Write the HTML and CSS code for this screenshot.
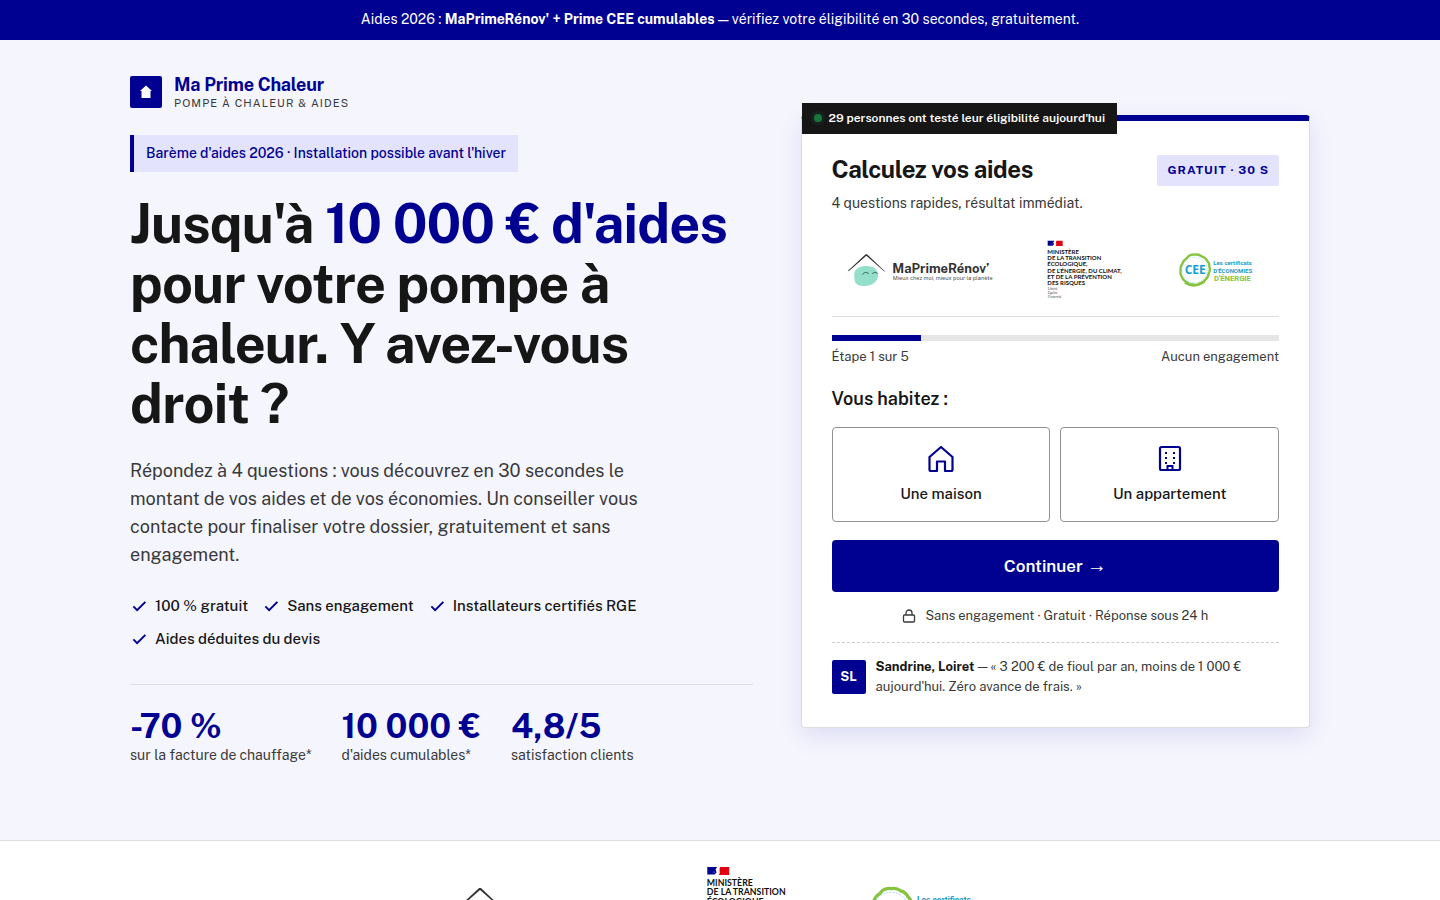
FILE: index.html
```html
<!DOCTYPE html>
<html lang="fr">
<head>
    <meta charset="UTF-8">
    <meta name="viewport" content="width=device-width, initial-scale=1.0">
    <title>Ma Prime Chaleur - Pompe à chaleur &amp; aides</title>
    <link rel="stylesheet" href="styles.css">
</head>
<body>
    <svg class="sprite" aria-hidden="true">
        <symbol id="check" viewBox="0 0 24 24">
            <path d="M4.5 12.5l5 5L20.500 6.500" fill="none" stroke="currentColor" stroke-width="2.600"/>
        </symbol>
    </svg>

    <div class="topbar">Aides 2026 : <strong>MaPrimeRénov' + Prime CEE cumulables</strong> — vérifiez votre éligibilité en 30 secondes, gratuitement.</div>

    <main class="hero">
        <div class="container hero-grid">
            <section class="intro">
                <a class="brand" href="#">
                    <span class="brand-icon">
                        <svg viewBox="0 0 32 32" width="32" height="32" aria-hidden="true">
                            <path d="M16 9.5l6 5.500h-1.500v7h-9v-7H10z" fill="#fff"/>
                        </svg>
                    </span>
                    <span>
                        <span class="brand-name">Ma Prime Chaleur</span>
                        <span class="brand-sub">Pompe à chaleur &amp; aides</span>
                    </span>
                </a>

                <p class="tag">Barème d'aides 2026 · Installation possible avant l'hiver</p>
                <h1>Jusqu'à <span class="accent">10 000 € d'aides</span> pour votre pompe à chaleur. Y avez-vous droit ?</h1>
                <p class="lead">Répondez à 4 questions : vous découvrez en 30 secondes le montant de vos aides et de vos économies. Un conseiller vous contacte pour finaliser votre dossier, gratuitement et sans engagement.</p>

                <ul class="checks">
                    <li><svg width="18" height="18" aria-hidden="true"><use href="#check"/></svg>100 % gratuit</li>
                    <li><svg width="18" height="18" aria-hidden="true"><use href="#check"/></svg>Sans engagement</li>
                    <li><svg width="18" height="18" aria-hidden="true"><use href="#check"/></svg>Installateurs certifiés RGE</li>
                    <li><svg width="18" height="18" aria-hidden="true"><use href="#check"/></svg>Aides déduites du devis</li>
                </ul>

                <div class="stats">
                    <div class="stat"><strong>-70 %</strong><span>sur la facture de chauffage*</span></div>
                    <div class="stat"><strong>10 000 €</strong><span>d'aides cumulables*</span></div>
                    <div class="stat"><strong>4,8/5</strong><span>satisfaction clients</span></div>
                </div>
            </section>

            <section class="card">
                <div class="live"><span class="dot"></span>29 personnes ont testé leur éligibilité aujourd'hui</div>
                <div class="card-head">
                    <h2>Calculez vos aides</h2>
                    <span class="pill">Gratuit · 30 s</span>
                </div>
                <p class="card-sub">4 questions rapides, résultat immédiat.</p>

                <div class="card-logos">
                    <svg class="logo-mpr" viewBox="0 0 534 180">
                        <path d="M67 102C68 84 88 77 104 78C126 78 138 90 138 106C138 126 120 138 98 138C80 139 68 132 68 120C68 114 66 110 67 102z" fill="#93dfca"/>
                        <path d="M50 94l-2-2 53-49h4l55 52-4-1-53-47z" fill="#333"/>
                        <path d="M92 104c3-8 14-9 18-2M121 102c4-7 13-6 16 0" fill="none" stroke="#2f5f54" stroke-width="3"/>
                        <text class="mpr-name" x="181" y="98">MaPrimeRénov’</text>
                        <text class="mpr-line" x="182" y="121">Mieux chez moi, mieux pour la planète</text>
                    </svg>
                    <svg class="logo-ministry" viewBox="0 0 240 180">
                        <path d="M17 2h20l-3 5 2 6-4 4H17z" fill="#000091"/>
                        <path d="M43 2h19v16H41l2-5-1-5z" fill="#e1000f"/>
                        <path d="M28 14l3-3 1 3M40 9l2 2-1 3" fill="none" stroke="#9090c8"/>
                        <g class="ministry-name">
                            <text x="16" y="41">MINISTÈRE</text>
                            <text x="16" y="60">DE LA TRANSITION</text>
                            <text x="16" y="79">ÉCOLOGIQUE,</text>
                            <text x="16" y="98">DE L'ÉNERGIE, DU CLIMAT,</text>
                            <text x="16" y="117">ET DE LA PRÉVENTION</text>
                            <text x="16" y="136">DES RISQUES</text>
                        </g>
                        <g class="ministry-motto">
                            <text x="17" y="151">Liberté</text>
                            <text x="17" y="163">Égalité</text>
                            <text x="17" y="175">Fraternité</text>
                        </g>
                    </svg>
                    <svg class="logo-cee" viewBox="0 0 375 180">
                        <path d="M104 48q10-6 19-4 12-2 20 5 11 3 16 13 8 8 7 18 4 11-2 20-1 12-10 19-6 10-17 11-10 7-20 3-12 1-19-7-11-4-14-15-7-9-4-20-2-11 5-20 4-11 13-16z" fill="none" stroke="#86c440" stroke-width="7"/>
                        <circle cx="122" cy="90" r="38" fill="none" stroke="#9ed5e6" stroke-width="2" stroke-dasharray="4 3"/>
                        <path d="M92 128q30 20 61-4" fill="none" stroke="#86c440" stroke-width="6"/>
                        <text class="cee-mark" x="92" y="103">CEE</text>
                        <text class="cee-line" x="178" y="74">Les certificats</text>
                        <text class="cee-line" x="178" y="99">D'ÉCONOMIES</text>
                        <text class="cee-line cee-green" x="180" y="124">D'ÉNERGIE</text>
                    </svg>
                </div>

                <div class="progress"><div class="progress-fill" style="width: 20%"></div></div>
                <div class="progress-meta"><span>Étape 1 sur 5</span><span>Aucun engagement</span></div>

                <h3>Vous habitez :</h3>
                <div class="options">
                    <button type="button" class="option">
                        <svg viewBox="0 0 28 28" width="28" height="28" aria-hidden="true">
                            <path d="M14 2L2.500 12v12.500q0 1.500 1.500 1.500h6V16.500h8V26h6q1.500 0 1.500-1.500V12z" fill="none" stroke="currentColor" stroke-width="2.200" stroke-linejoin="round"/>
                        </svg>
                        Une maison
                    </button>
                    <button type="button" class="option">
                        <svg viewBox="0 0 28 28" width="28" height="28" aria-hidden="true">
                            <rect x="4" y="2" width="20" height="23" rx="1.500" fill="none" stroke="currentColor" stroke-width="2.200"/>
                            <path d="M9 7h2v2H9zM17 7h2v2h-2zM9 12h2v2H9zM17 12h2v2h-2zM9 17h2v2H9zM17 17h2v2h-2z" fill="currentColor"/>
                            <path d="M11.500 25v-4h5v4" fill="none" stroke="currentColor" stroke-width="2"/>
                        </svg>
                        Un appartement
                    </button>
                </div>

                <button type="button" class="cta">Continuer <span class="arrow">→</span></button>

                <p class="reassure">
                    <svg viewBox="0 0 14 14" width="14" height="14" aria-hidden="true">
                        <path d="M2.500 6h9q1 0 1 1v5q0 1-1 1h-9q-1 0-1-1V7q0-1 1-1zM4 6V4a3 3 0 0 1 6 0v2" fill="none" stroke="currentColor" stroke-width="1.300"/>
                    </svg>
                    Sans engagement · Gratuit · Réponse sous 24 h
                </p>

                <div class="review">
                    <span class="avatar">SL</span>
                    <p><strong>Sandrine, Loiret</strong> — « 3 200 € de fioul par an, moins de 1 000 € aujourd'hui. Zéro avance de frais. »</p>
                </div>
            </section>
        </div>
    </main>

    <section class="partners">
        <svg class="logo-mpr" viewBox="0 0 534 180">
            <path d="M67 102C68 84 88 77 104 78C126 78 138 90 138 106C138 126 120 138 98 138C80 139 68 132 68 120C68 114 66 110 67 102z" fill="#93dfca"/>
            <path d="M50 94l-2-2 53-49h4l55 52-4-1-53-47z" fill="#333"/>
            <path d="M92 104c3-8 14-9 18-2M121 102c4-7 13-6 16 0" fill="none" stroke="#2f5f54" stroke-width="3"/>
            <text class="mpr-name" x="181" y="98">MaPrimeRénov’</text>
            <text class="mpr-line" x="182" y="121">Mieux chez moi, mieux pour la planète</text>
        </svg>
        <svg class="logo-ministry" viewBox="0 0 240 180">
            <path d="M17 2h20l-3 5 2 6-4 4H17z" fill="#000091"/>
            <path d="M43 2h19v16H41l2-5-1-5z" fill="#e1000f"/>
            <path d="M28 14l3-3 1 3M40 9l2 2-1 3" fill="none" stroke="#9090c8"/>
            <g class="ministry-name">
                <text x="16" y="41">MINISTÈRE</text>
                <text x="16" y="60">DE LA TRANSITION</text>
                <text x="16" y="79">ÉCOLOGIQUE,</text>
                <text x="16" y="98">DE L'ÉNERGIE, DU CLIMAT,</text>
                <text x="16" y="117">ET DE LA PRÉVENTION</text>
                <text x="16" y="136">DES RISQUES</text>
            </g>
            <g class="ministry-motto">
                <text x="17" y="151">Liberté</text>
                <text x="17" y="163">Égalité</text>
                <text x="17" y="175">Fraternité</text>
            </g>
        </svg>
        <svg class="logo-cee" viewBox="0 0 375 180">
            <path d="M104 48q10-6 19-4 12-2 20 5 11 3 16 13 8 8 7 18 4 11-2 20-1 12-10 19-6 10-17 11-10 7-20 3-12 1-19-7-11-4-14-15-7-9-4-20-2-11 5-20 4-11 13-16z" fill="none" stroke="#86c440" stroke-width="7"/>
            <circle cx="122" cy="90" r="38" fill="none" stroke="#9ed5e6" stroke-width="2" stroke-dasharray="4 3"/>
            <path d="M92 128q30 20 61-4" fill="none" stroke="#86c440" stroke-width="6"/>
            <text class="cee-mark" x="92" y="103">CEE</text>
            <text class="cee-line" x="178" y="74">Les certificats</text>
            <text class="cee-line" x="178" y="99">D'ÉCONOMIES</text>
            <text class="cee-line cee-green" x="180" y="124">D'ÉNERGIE</text>
        </svg>
    </section>
</body>
</html>
```
FILE: styles.css
```css
* {
    box-sizing: border-box;
}
html {
    overflow-x: hidden;
    scrollbar-width: none;
}
body {
    margin: 0;
    background: #fff;
    color: #161616;
    font-family: 'Public Sans', Inter, sans-serif;
    font-size: 16px;
}
h1, h2, h3, p, ul {
    margin: 0;
    padding: 0;
}
button {
    font-family: inherit;
    cursor: pointer;
}
.sprite {
    position: absolute;
    width: 0;
    height: 0;
}
.topbar {
    background: #000091;
    color: #fff;
    text-align: center;
    font-size: 14px;
    line-height: 20px;
    padding: 9px 20px 11px;
}
.container {
    max-width: 1220px;
    margin: 0 auto;
    padding: 0 20px;
}

/* Hero */
.hero {
    background: #f5f5fe;
    border-bottom: 1px solid #ddd;
    padding: 34px 0 72px;
}
.hero-grid {
    display: grid;
    grid-template-columns: 1.1fr 0.9fr;
    gap: 48px;
    align-items: center;
}
.brand {
    display: flex;
    align-items: center;
    gap: 12px;
    color: #000091;
    text-decoration: none;
    margin-bottom: 25px;
}
.brand-icon {
    width: 32px;
    height: 32px;
    background: #000091;
    border-radius: 2px;
}
.brand-name {
    display: block;
    font-size: 18px;
    font-weight: 700;
    line-height: 22px;
    letter-spacing: -0.01em;
}
.brand-sub {
    display: block;
    font-size: 11px;
    line-height: 14px;
    letter-spacing: 0.1em;
    text-transform: uppercase;
    color: #3a3a3a;
}
.tag {
    display: inline-block;
    background: #e3e3fd;
    border-left: 4px solid #000091;
    color: #000091;
    font-size: 14px;
    font-weight: 500;
    line-height: 21px;
    padding: 8px 12px;
    margin-bottom: 22px;
}
h1 {
    font-size: 54px;
    font-weight: 700;
    line-height: 60px;
    letter-spacing: -0.015em;
    margin-bottom: 23px;
}
.accent {
    color: #000091;
}
.lead {
    max-width: 540px;
    color: #3a3a3a;
    font-size: 18px;
    line-height: 28px;
    margin-bottom: 25px;
}
.checks {
    display: flex;
    flex-wrap: wrap;
    gap: 9px 14px;
    max-width: 540px;
    list-style: none;
    font-size: 15px;
    font-weight: 500;
    line-height: 24px;
    margin-bottom: 33px;
}
.checks li {
    display: flex;
    align-items: center;
    gap: 7px;
}
.checks svg {
    color: #000091;
}
.stats {
    display: flex;
    gap: 30px;
    border-top: 1px solid #ddd;
    padding: 22px 0 2px;
}
.stat strong {
    display: block;
    color: #000091;
    font-size: 34px;
    line-height: 38px;
}
.stat span {
    display: block;
    color: #3a3a3a;
    font-size: 14px;
    line-height: 21px;
}

/* Form card */
.card {
    position: relative;
    background: #fff;
    border: 1px solid #ddd;
    border-top: 6px solid #000091;
    border-radius: 4px;
    box-shadow: 0 8px 24px rgba(0, 0, 145, 0.1);
    padding: 34px 30px 30px;
}
.live {
    position: absolute;
    top: -18px;
    left: 0;
    display: flex;
    align-items: center;
    gap: 7px;
    background: #161616;
    color: #fff;
    font-size: 12px;
    font-weight: 600;
    line-height: 19px;
    padding: 6px 12px;
}
.dot {
    width: 8px;
    height: 8px;
    border-radius: 50%;
    background: #18753c;
    box-shadow: 0 0 0 3px rgba(24, 117, 60, 0.15);
}
.card-head {
    display: flex;
    justify-content: space-between;
    align-items: flex-start;
}
h2 {
    font-size: 24px;
    font-weight: 700;
    line-height: 28px;
    letter-spacing: -0.015em;
}
.pill {
    background: #e3e3fd;
    color: #000091;
    border-radius: 2px;
    font-size: 12px;
    font-weight: 700;
    line-height: 19px;
    letter-spacing: 1px;
    text-transform: uppercase;
    padding: 6px 10px;
}
.card-sub {
    color: #3a3a3a;
    font-size: 14px;
    line-height: 22px;
    margin: 6px 0 26px;
}
.card-logos {
    display: flex;
    justify-content: space-between;
    border-bottom: 1px solid #ddd;
    padding-bottom: 16px;
    margin-bottom: 18px;
}
.card-logos svg {
    height: 60px;
}
.card-logos .logo-mpr {
    width: 178px;
}
.card-logos .logo-ministry {
    width: 80px;
}
.card-logos .logo-cee {
    width: 125px;
}
.progress {
    height: 6px;
    background: #e5e5e5;
}
.progress-fill {
    height: 100%;
    background: #000091;
}
.progress-meta {
    display: flex;
    justify-content: space-between;
    color: #3a3a3a;
    font-size: 13px;
    line-height: 20px;
    margin: 6px 0 20px;
}
h3 {
    font-size: 18px;
    font-weight: 600;
    line-height: 24px;
    margin-bottom: 16px;
}
.options {
    display: grid;
    grid-template-columns: 1fr 1fr;
    gap: 10px;
    margin-bottom: 18px;
}
.option {
    display: flex;
    flex-direction: column;
    align-items: center;
    gap: 9px;
    background: #fff;
    border: 1px solid #929292;
    border-radius: 4px;
    color: #161616;
    font-size: 15px;
    font-weight: 500;
    line-height: 24px;
    padding: 17px 10px 15px;
}
.option svg {
    color: #000091;
}
.cta {
    display: block;
    width: 100%;
    background: #000091;
    border: none;
    border-radius: 4px;
    color: #fff;
    font-size: 17px;
    font-weight: 600;
    line-height: 20px;
    padding: 16px;
}
.cta:hover {
    background: #1212ff;
}
.arrow {
    font-family: 'Liberation Sans', sans-serif;
    font-size: 20px;
    font-weight: 400;
    line-height: 0;
}
.reassure {
    display: flex;
    justify-content: center;
    align-items: center;
    gap: 9px;
    color: #3a3a3a;
    font-size: 13px;
    line-height: 20px;
    margin: 14px 0 16px;
}
.review {
    display: flex;
    align-items: center;
    gap: 10px;
    border-top: 1px dashed #ccc;
    padding-top: 14px;
    color: #3a3a3a;
    font-size: 13px;
    line-height: 20px;
}
.review strong {
    color: #161616;
}
.avatar {
    flex: none;
    width: 34px;
    background: #000091;
    border-radius: 2px;
    color: #fff;
    font-size: 13px;
    font-weight: 700;
    line-height: 34px;
    text-align: center;
}

/* Partner strip */
.partners {
    display: flex;
    justify-content: center;
    align-items: center;
    gap: 18px;
    padding: 25px 20px;
}
.partners svg {
    height: 84px;
}
.partners .logo-mpr {
    width: 249px;
}
.partners .logo-ministry {
    width: 117px;
    height: 88px;
}
.partners .logo-cee {
    width: 175px;
}
.logo-ministry {
    overflow: visible;
}

/* Logo lettering, in the units of each logo */
.mpr-name {
    font: 700 39px 'Public Sans', Inter, sans-serif;
    fill: #333;
}
.mpr-line {
    font: 400 17px 'Public Sans', Inter, sans-serif;
    fill: #555;
}
.ministry-name {
    font: 700 18px Lato, sans-serif;
    fill: #111;
}
.ministry-motto {
    font: italic 400 10px 'Liberation Serif', serif;
    fill: #444;
}
.cee-mark {
    font: 700 36px 'Open Sans', sans-serif;
    fill: #179fd0;
}
.cee-line {
    font: 700 18px Roboto, sans-serif;
    fill: #1c9cc4;
}
.cee-green {
    font-size: 23px;
    fill: #86c440;
}
```
